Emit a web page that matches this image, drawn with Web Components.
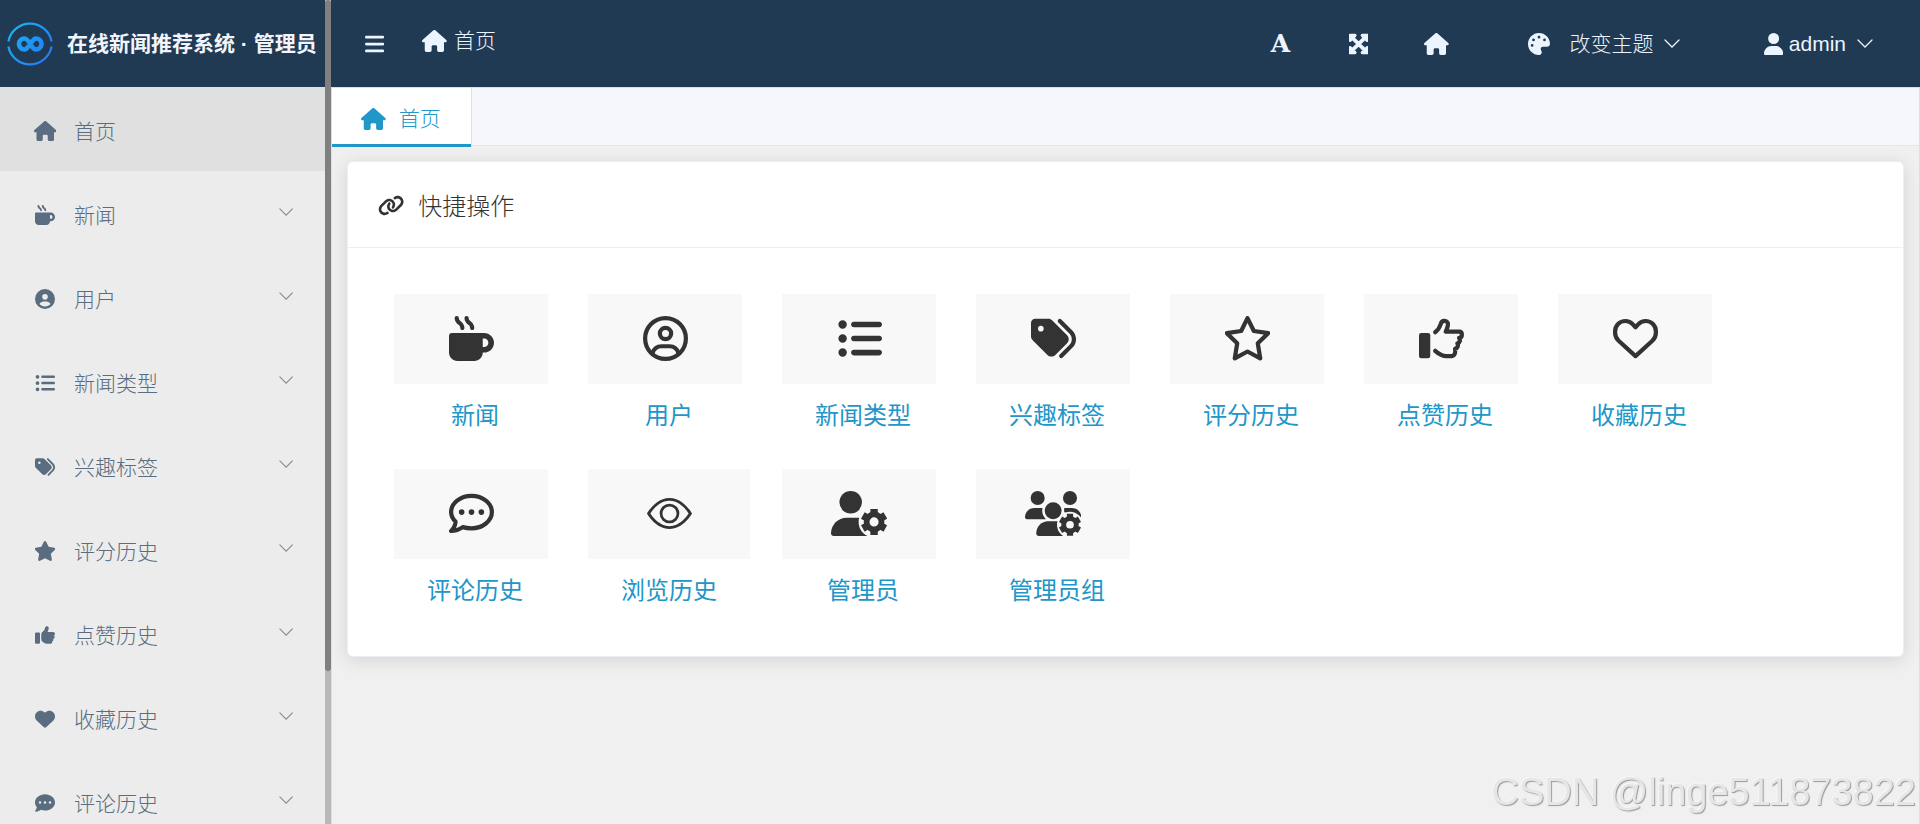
<!DOCTYPE html>
<html lang="zh-CN">
<head>
<meta charset="UTF-8">
<title>在线新闻推荐系统 · 管理员</title>
<style>
    :root {
        --header-bg: #203a53;
        --header-text: #ecf5ff;
        --menu-bg: #ececec;
        --menu-active: #e0e0e0;
        --menu-text: #596c80;
        --primary: #2196c9;
        --dark: #333333;
        --page-bg: #f0f0f0;
        --line: #ebeef5;
    }
    html, body { margin: 0; height: 100%; }
    body {
        font-family: "Liberation Sans", "Noto Sans CJK SC", sans-serif;
        font-size: 21px;
        font-weight: 300;
        overflow: hidden;
    }
</style>
</head>
<body>
<x-app>
    <x-sidebar slot="side">
        <x-brand slot="brand">在线新闻推荐系统 · 管理员</x-brand>
        <x-menu-item icon="home" active>首页</x-menu-item>
        <x-menu-item icon="mug">新闻</x-menu-item>
        <x-menu-item icon="user-circle">用户</x-menu-item>
        <x-menu-item icon="list">新闻类型</x-menu-item>
        <x-menu-item icon="tags">兴趣标签</x-menu-item>
        <x-menu-item icon="star">评分历史</x-menu-item>
        <x-menu-item icon="thumb">点赞历史</x-menu-item>
        <x-menu-item icon="heart">收藏历史</x-menu-item>
        <x-menu-item icon="comment">评论历史</x-menu-item>
    </x-sidebar>
    <x-topbar slot="top"></x-topbar>
    <x-tab slot="tabs" icon="home">首页</x-tab>
    <x-card icon="link" heading="快捷操作">
        <x-quick-link icon="mug">新闻</x-quick-link>
        <x-quick-link icon="user-circle-o">用户</x-quick-link>
        <x-quick-link icon="list">新闻类型</x-quick-link>
        <x-quick-link icon="tags">兴趣标签</x-quick-link>
        <x-quick-link icon="star-o">评分历史</x-quick-link>
        <x-quick-link icon="thumb-o">点赞历史</x-quick-link>
        <x-quick-link icon="heart-o">收藏历史</x-quick-link>
        <x-quick-link icon="comment-o">评论历史</x-quick-link>
        <x-quick-link icon="eye" wide>浏览历史</x-quick-link>
        <x-quick-link icon="user-gear">管理员</x-quick-link>
        <x-quick-link icon="users-gear">管理员组</x-quick-link>
    </x-card>
</x-app>
<x-watermark>CSDN @linge511873822</x-watermark>

<script>
// ═══════════════════════════════════════
// ICONS: [width, height, markup]
// ═══════════════════════════════════════
const line = 'fill="none" stroke="currentColor" stroke-width="48" stroke-linecap="round" stroke-linejoin="round"';

// Gear with six teeth around (0, 0), outer radius 148
const gear = `<circle r="85" fill="none" stroke="currentColor" stroke-width="66"/>
    <path fill="none" stroke="currentColor" stroke-width="84" stroke-linejoin="round"
        d="M0-96V-148M0 96V148M83-48L128-74M-83-48L-128-74M83 48L128 74M-83 48L-128 74"/>`;

const ICONS = {
    'home': [576, 512, '<path d="M575.8 255.5c0 18-15 32.1-32 32.1h-32l.7 160.2c0 2.7-.2 5.4-.5 8.1V472c0 22.1-17.9 40-40 40H456c-1.1 0-2.2 0-3.3-.1c-1.4 .1-2.8 .1-4.2 .1H392c-22.1 0-40-17.9-40-40V384c0-17.7-14.3-32-32-32H256c-17.7 0-32 14.3-32 32v88c0 22.1-17.9 40-40 40H128.1c-1.5 0-3-.1-4.5-.2c-1.2 .1-2.4 .2-3.6 .2H104c-22.1 0-40-17.9-40-40V360c0-.9 0-1.9 .1-2.8V287.6H32c-18 0-32-14-32-32.1c0-9 3-17 10-24L266.4 8c7-7 15-8 22-8s15 2 21 7L564.8 231.5c8 7 12 15 11 24z"/>'],
    'mug': [512, 512, '<path d="M88 0C74.7 0 64 10.7 64 24c0 38.9 23.4 59.4 39.1 73.1l1.1 1C120.5 112.3 128 119.9 128 136c0 13.3 10.7 24 24 24s24-10.7 24-24c0-38.9-23.4-59.4-39.1-73.1l-1.1-1C119.5 47.7 112 40.1 112 24c0-13.3-10.7-24-24-24zM32 192c-17.7 0-32 14.3-32 32V416c0 53 43 96 96 96H288c53 0 96-43 96-96h16c61.9 0 112-50.1 112-112s-50.1-112-112-112H32zm352 64h16c26.5 0 48 21.5 48 48s-21.5 48-48 48H384V256zM224 24c0-13.3-10.7-24-24-24s-24 10.7-24 24c0 38.9 23.4 59.4 39.1 73.1l1.1 1C232.5 112.3 240 119.9 240 136c0 13.3 10.7 24 24 24s24-10.7 24-24c0-38.9-23.4-59.4-39.1-73.1l-1.1-1C231.5 47.7 224 40.1 224 24z"/>'],
    'user-circle': [512, 512, '<path fill-rule="evenodd" d="M399 384.2C376.9 345.8 335.4 320 288 320H224c-47.4 0-88.9 25.8-111 64.2c35.2 39.2 86.2 63.8 143 63.8s107.8-24.7 143-63.8zM0 256a256 256 0 1 1 512 0A256 256 0 1 1 0 256zm256 16a72 72 0 1 0 0-144 72 72 0 1 0 0 144z"/>'],
    'user-circle-o': [512, 512, `<g ${line}><circle cx="256" cy="256" r="232"/><circle cx="256" cy="200" r="64"/><path d="M108 424C122 376 160 344 210 344H302C352 344 390 376 404 424"/></g>`],
    'list': [512, 512, '<path d="M64 144a48 48 0 1 0 0-96 48 48 0 1 0 0 96zM192 64c-17.7 0-32 14.3-32 32s14.3 32 32 32H480c17.7 0 32-14.3 32-32s-14.3-32-32-32H192zm0 160c-17.7 0-32 14.3-32 32s14.3 32 32 32H480c17.7 0 32-14.3 32-32s-14.3-32-32-32H192zm0 160c-17.7 0-32 14.3-32 32s14.3 32 32 32H480c17.7 0 32-14.3 32-32s-14.3-32-32-32H192zM64 464a48 48 0 1 0 0-96 48 48 0 1 0 0 96zm48-208a48 48 0 1 0 -96 0 48 48 0 1 0 96 0z"/>'],
    'tags': [512, 512, '<path d="M345 39.1L472.8 168.4c52.4 53 52.4 138.2 0 191.2L360.8 472.9c-9.3 9.4-24.5 9.5-33.9 .2s-9.5-24.5-.2-33.9L438.6 325.9c33.9-34.3 33.9-89.4 0-123.7L310.9 72.9c-9.3-9.4-9.2-24.6 .2-33.9s24.6-9.2 33.9 .2zM0 229.5V80C0 53.5 21.5 32 48 32H197.5c17 0 33.3 6.7 45.3 18.7l168 168c25 25 25 65.5 0 90.5L277.3 442.7c-25 25-65.5 25-90.5 0l-168-168C6.7 262.7 0 246.5 0 229.5zM144 144a32 32 0 1 0 -64 0 32 32 0 1 0 64 0z"/>'],
    'star': [512, 512, '<path transform="translate(-32 0)" d="M316.9 18C311.6 7 300.4 0 288.1 0s-23.4 7-28.8 18L195 150.3 51.4 171.5c-12 1.8-22 10.2-25.7 21.7s-.7 24.2 7.9 32.7L137.8 329 113.2 474.7c-2 12 3 24.2 12.9 31.3s23 8 33.8 2.3l128.3-68.5 128.3 68.5c10.8 5.7 23.9 4.9 33.8-2.3s14.9-19.3 12.9-31.3L438.5 329 542.7 225.9c8.6-8.5 11.7-21.2 7.9-32.7s-13.7-19.9-25.7-21.7L381.2 150.3 316.9 18z"/>'],
    'star-o': [512, 512, `<path ${line} d="M256 24L328 171 491 195 373 311 401 482 256 404 111 482 139 311 21 195 184 171Z"/>`],
    'thumb': [512, 512, '<path d="M313.4 32.9c26 5.2 42.9 30.5 37.7 56.5l-2.3 11.4c-5.3 26.7-15.1 52.1-28.8 75.2H464c26.5 0 48 21.5 48 48c0 18.5-10.5 34.6-25.9 42.6C497 275.4 504 288.9 504 304c0 23.4-16.8 42.9-38.9 47.1c4.4 7.3 6.9 15.8 6.9 24.9c0 21.3-13.9 39.4-33.1 45.6c.7 3.3 1.1 6.8 1.1 10.4c0 26.5-21.5 48-48 48H294.5c-19 0-37.5-5.6-53.3-16.1l-38.5-25.7C176 420.4 160 390.4 160 358.3V247.1c0-29.2 13.3-56.7 36-75l7.4-5.9c26.5-21.2 44.6-51 51.2-84.2l2.3-11.4c5.2-26 30.5-42.9 56.5-37.7zM32 192H96c17.7 0 32 14.3 32 32V448c0 17.7-14.3 32-32 32H32c-17.7 0-32-14.3-32-32V224c0-17.7 14.3-32 32-32z"/>'],
    'thumb-o': [512, 512, `<rect y="192" width="128" height="288" rx="26"/><path ${line} d="M184 185C220 158 236 128 246 94C253 66 268 54 292 56C320 59 335 80 329 105C324 131 316 154 304 178H456C478 178 488 194 488 212C488 232 476 246 456 249C475 268 470 300 436 312C452 336 440 366 410 374C418 404 410 456 374 456H312C262 456 222 430 184 396"/>`],
    'heart': [512, 512, '<path d="M47.6 300.4L228.3 469.1c7.5 7 17.4 10.9 27.7 10.9s20.2-3.9 27.7-10.9L464.4 300.4c30.4-28.3 47.6-68 47.6-109.5v-5.8c0-69.9-50.5-129.5-119.4-141C347 36.5 300.6 51.4 268 84L256 96 244 84c-32.6-32.6-79-47.5-124.6-39.9C50.5 55.6 0 115.2 0 185.1v5.8c0 41.5 17.2 81.2 47.6 109.5z"/>'],
    'heart-o': [512, 512, `<path ${line} d="M256 128L226 95C202 68 170 57 140 57C75 57 24 108 24 175v15c0 35 15 68 40 92L256 456 448 282c25-24 40-57 40-92v-15C488 108 437 57 372 57C342 57 310 68 286 95Z"/>`],
    'comment': [512, 512, '<path fill-rule="evenodd" d="M256 448c141.4 0 256-93.1 256-208S397.4 32 256 32S0 125.1 0 240c0 45.1 17.7 86.8 47.7 120.9c-1.9 24.5-11.4 46.3-21.4 62.9c-5.5 9.2-11.1 16.6-15.2 21.6c-2.1 2.5-3.7 4.4-6.5 7.4c-4.6 4.6-5.9 11.4-3.4 17.4c2.5 6 8.3 9.9 14.8 9.9c28.7 0 57.6-8.9 81.6-19.3c22.9-10 42.4-21.9 54.3-30.6c31.8 11.5 67 17.9 104.1 17.9zM128 208a32 32 0 1 1 0 64 32 32 0 1 1 0-64zm128 0a32 32 0 1 1 0 64 32 32 0 1 1 0-64zm96 32a32 32 0 1 1 64 0 32 32 0 1 1 -64 0z"/>'],
    'comment-o': [512, 512, `<path ${line} d="M256 424C384 424 488 341 488 240S384 56 256 56 24 139 24 240C24 282 42 318 74 348C72 390 56 424 24 455C72 455 116 440 156 411C188 420 220 424 256 424Z"/><circle cx="144" cy="240" r="32"/><circle cx="256" cy="240" r="32"/><circle cx="368" cy="240" r="32"/>`],
    'eye': [1024, 1024, '<path d="M512 160c320 0 512 352 512 352S832 864 512 864 0 512 0 512s192-352 512-352zm0 64c-225.28 0-384.128 208.064-436.8 288 52.608 79.872 211.456 288 436.8 288 225.28 0 384.128-208.064 436.8-288-52.608-79.872-211.456-288-436.8-288zm0 64a224 224 0 1 1 0 448 224 224 0 0 1 0-448zm0 64a160.192 160.192 0 0 0-160 160c0 88.192 71.744 160 160 160s160-71.808 160-160-71.744-160-160-160z"/>'],
    'user-gear': [640, 512, `<mask id="m"><rect width="640" height="512" fill="#fff"/><circle cx="490" cy="352" r="176" fill="#000"/></mask>
        <circle cx="224" cy="128" r="128"/>
        <path mask="url(#m)" d="M178 304C80 304 0 384 0 482C0 499 13 512 30 512H418C440 512 448 499 448 482V304Z"/>
        <g transform="translate(490 352)">${gear}</g>`],
    'users-gear': [640, 512, `<mask id="m"><rect width="640" height="512" fill="#fff"/><circle cx="320" cy="224" r="124" fill="#000"/></mask>
        <mask id="n"><rect width="640" height="512" fill="#fff"/><circle cx="512" cy="384" r="148" fill="#000"/></mask>
        <circle cx="144" cy="80" r="80"/><circle cx="512" cy="80" r="80"/><circle cx="320" cy="224" r="96"/>
        <path mask="url(#m)" d="M106 192C48 192 0 240 0 299C0 311 10 320 21 320H236V192Z"/>
        <g mask="url(#n)"><path d="M446 192H534C592 192 640 240 640 299H600L512 270 446 240Z"/>
        <path d="M262 344C190 344 128 404 128 480C128 500 142 512 156 512H460V344Z"/></g>
        <g transform="translate(512 384) scale(.84)">${gear}</g>`],
    'link': [640, 512, '<path d="M579.8 267.7c56.5-56.5 56.5-148 0-204.5c-50-50-128.8-56.5-186.3-15.4l-1.6 1.1c-14.4 10.3-17.7 30.3-7.4 44.6s30.3 17.7 44.6 7.4l1.6-1.1c32.1-22.9 76-19.3 103.8 8.6c31.5 31.5 31.5 82.5 0 114L422.3 334.8c-31.5 31.5-82.5 31.5-114 0c-27.9-27.9-31.5-71.8-8.6-103.8l1.1-1.6c10.3-14.4 6.9-34.4-7.4-44.6s-34.4-6.9-44.6 7.4l-1.1 1.6C206.5 251.2 213 330 263 380c56.5 56.5 148 56.5 204.5 0L579.8 267.7zM60.2 244.3c-56.5 56.5-56.5 148 0 204.5c50 50 128.8 56.5 186.3 15.4l1.6-1.1c14.4-10.3 17.7-30.3 7.4-44.6s-30.3-17.7-44.6-7.4l-1.6 1.1c-32.1 22.9-76 19.3-103.8-8.6C74 372 74 321 105.5 289.5L217.7 177.2c31.5-31.5 82.5-31.5 114 0c27.9 27.9 31.5 71.8 8.6 103.9l-1.1 1.6c-10.3 14.4-6.9 34.4 7.4 44.6s34.4 6.9 44.6-7.4l1.1-1.6C433.5 260.8 427 182 377 132c-56.5-56.5-148-56.5-204.5 0L60.2 244.3z"/>'],
    'bars': [448, 512, '<path d="M0 96C0 78 14 64 32 64H416a32 32 0 0 1 0 64H32C14 128 0 114 0 96zM0 256c0-18 14-32 32-32H416a32 32 0 0 1 0 64H32c-18 0-32-14-32-32zM0 416c0-18 14-32 32-32H416a32 32 0 0 1 0 64H32c-18 0-32-14-32-32z"/>'],
    'expand': [448, 512, '<path stroke="currentColor" stroke-width="32" d="M448 344v112a23.94 23.94 0 0 1-24 24H312c-21.39 0-32.09-25.9-17-41l36.2-36.2L224 295.6 116.77 402.9 153 439c15.09 15.1 4.39 41-17 41H24a23.94 23.94 0 0 1-24-24V344c0-21.4 25.89-32.1 41-17l36.19 36.2L184.46 256 77.18 148.7 41 185c-15.1 15.1-41 4.4-41-17V56a23.94 23.94 0 0 1 24-24h112c21.39 0 32.09 25.9 17 41l-36.2 36.2L224 216.4l107.23-107.3L295 73c-15.09-15.1-4.39-41 17-41h112a23.94 23.94 0 0 1 24 24v112c0 21.4-25.89 32.1-41 17l-36.19-36.2L263.54 256l107.28 107.3L407 327c15.1-15.2 41-4.5 41 17z"/>'],
    'palette': [512, 512, '<path d="M512 256c0 .9 0 1.8 0 2.7c-.4 36.5-33.6 61.3-70.1 61.3H344c-26.5 0-48 21.5-48 48c0 3.4 .4 6.7 1 9.9c2.1 10.2 6.5 20 10.8 29.9c6.1 13.8 12.1 27.5 12.1 42c0 31.8-21.6 60.7-53.4 62c-3.5 .1-7 .2-10.6 .2C114.6 512 0 397.4 0 256S114.6 0 256 0S512 114.6 512 256zM128 288a32 32 0 1 0 -64 0 32 32 0 1 0 64 0zm0-96a32 32 0 1 0 0-64 32 32 0 1 0 0 64zM288 96a32 32 0 1 0 -64 0 32 32 0 1 0 64 0zm96 96a32 32 0 1 0 0-64 32 32 0 1 0 0 64z"/>'],
    'user': [448, 512, '<path d="M224 256A128 128 0 1 0 224 0a128 128 0 1 0 0 256zm-45.7 48C79.8 304 0 383.8 0 482.3C0 498.7 13.3 512 29.7 512H418.3c16.4 0 29.7-13.3 29.7-29.7C448 383.8 368.2 304 269.7 304H178.3z"/>'],
    'chevron': [16, 9, '<path fill="none" stroke="currentColor" stroke-width="1.3" stroke-linecap="round" d="M1 1L8 8 15 1"/>'],
    'logo': [46, 46, `<defs><linearGradient id="g" gradientUnits="userSpaceOnUse" x1="4" y1="8" x2="42" y2="38"><stop stop-color="#1ab2f3"/><stop offset="1" stop-color="#2478f5"/></linearGradient></defs>
        <g fill="none" stroke="url(#g)"><path stroke-width="2.2" d="M1.4 20.5A22 22 0 0 1 44.6 20.5M1.4 25.5A22 22 0 0 0 44.6 25.5"/>
        <path stroke-width="4.6" stroke-linecap="round" d="M21 25.8C20 27.4 19 28.5 17.5 28.5A5.5 5.5 0 0 1 17.5 17.5C22.5 17.5 24 28.5 29 28.5A5.5 5.5 0 0 0 29 17.5C27.4 17.5 26.4 18.6 25.4 20.2"/></g>`]
};

class AppIcon extends HTMLElement {
    connectedCallback() {
        const [w, h, body] = ICONS[this.getAttribute('name')];
        const root = this.shadowRoot || this.attachShadow({ mode: 'open' });
        root.innerHTML = `
            <style>
                :host { display: inline-flex; flex: none; height: 22px; }
                svg { display: block; height: 100%; width: auto; aspect-ratio: ${w} / ${h}; }
            </style>
            <svg viewBox="0 0 ${w} ${h}" fill="currentColor" aria-hidden="true">${body}</svg>
        `;
    }
}

// ═══════════════════════════════════════
// BASE: renders view() into the shadow root
// ═══════════════════════════════════════
class BaseElement extends HTMLElement {
    constructor() {
        super();
        this.attachShadow({ mode: 'open' });
    }

    connectedCallback() {
        this.shadowRoot.innerHTML = `
            <style>
                * { box-sizing: border-box; }
                a { color: inherit; text-decoration: none; }
                button { font: inherit; color: inherit; background: none; border: 0; padding: 0; margin: 0; cursor: pointer; }
                .text { padding-bottom: 3px; }
            </style>
            ${this.view()}
        `;
    }
}

class AppShell extends BaseElement {
    view() {
        return `
            <style>
                :host { display: flex; height: 100vh; background: var(--page-bg); }
                .main { flex: 1; min-width: 0; display: flex; flex-direction: column; }
                .page { flex: 1; display: flex; flex-direction: column; border: 1px solid #dcdfe6; border-bottom: 0; }
                .tabs { display: flex; height: 58px; background: #f5f7fc; border-bottom: 1px solid #e4e7ed; }
                main { padding: 15px; }
            </style>
            <slot name="side"></slot>
            <div class="main">
                <slot name="top"></slot>
                <div class="page">
                    <nav class="tabs"><slot name="tabs"></slot></nav>
                    <main><slot></slot></main>
                </div>
            </div>
        `;
    }
}

class AppSidebar extends BaseElement {
    view() {
        return `
            <style>
                :host { display: flex; flex: none; width: 331px; overflow: hidden; background: var(--menu-bg); }
                .content { flex: 1; min-width: 0; overflow: hidden; }
                .track { flex: none; width: 6px; background: #b8b8b8; }
                .thumb { height: 81.4%; border-radius: 3px; background: #808080; }
            </style>
            <div class="content">
                <slot name="brand"></slot>
                <nav><slot></slot></nav>
            </div>
            <div class="track"><div class="thumb"></div></div>
        `;
    }
}

class AppBrand extends BaseElement {
    view() {
        return `
            <style>
                :host {
                    display: flex; align-items: center; gap: 14px;
                    height: 87px; padding-left: 7px; box-sizing: border-box;
                    background: var(--header-bg); color: #f2f6fc;
                    font-weight: 700; white-space: nowrap;
                }
                x-icon { height: 46px; }
            </style>
            <x-icon name="logo"></x-icon><span class="text"><slot></slot></span>
        `;
    }
}

class MenuItem extends BaseElement {
    view() {
        const active = this.hasAttribute('active');
        return `
            <style>
                :host { display: block; color: var(--menu-text); }
                a { display: flex; align-items: center; height: 84px; padding: 4px 32px 0 33px; background: ${active ? 'var(--menu-active)' : 'none'}; }
                .icon { display: flex; justify-content: center; width: 24px; margin-right: 17px; }
                .icon x-icon { height: 20px; }
                .arrow { height: 8px; margin: 0 0 7px auto; color: #868c96; }
            </style>
            <a href="#"><span class="icon"><x-icon name="${this.getAttribute('icon')}"></x-icon></span>
            <span class="text"><slot></slot></span>
            ${active ? '' : '<x-icon class="arrow" name="chevron"></x-icon>'}</a>
        `;
    }
}

class AppTopbar extends BaseElement {
    view() {
        return `
            <style>
                :host {
                    display: flex; align-items: center; flex: none;
                    height: 87px; padding: 0 47px 0 34px; box-sizing: border-box;
                    background: var(--header-bg); color: var(--header-text); white-space: nowrap;
                }
                button, a { display: flex; align-items: center; }
                .crumb { gap: 7px; margin-left: 38px; padding-bottom: 6px; }
                .tools { display: flex; margin-left: auto; }
                .tools > * { width: 78px; justify-content: center; }
                .letter { font: 700 25px/28px "DejaVu Serif", serif; }
                .theme { gap: 10px; margin-left: 52px; }
                .theme .text { margin-left: 10px; }
                .account { gap: 11px; margin-left: 84px; }
                .account .name { display: flex; align-items: center; gap: 6px; }
                .arrow { height: 9px; }
            </style>
            <button aria-label="菜单"><x-icon name="bars"></x-icon></button>
            <a class="crumb" href="#"><x-icon name="home"></x-icon><span class="text">首页</span></a>
            <div class="tools">
                <button class="letter">A</button>
                <button aria-label="全屏"><x-icon name="expand"></x-icon></button>
                <a href="#" aria-label="首页"><x-icon name="home"></x-icon></a>
            </div>
            <button class="theme"><x-icon name="palette"></x-icon><span class="text">改变主题</span><x-icon class="arrow" name="chevron"></x-icon></button>
            <button class="account"><span class="name"><x-icon name="user"></x-icon>admin</span><x-icon class="arrow" name="chevron"></x-icon></button>
        `;
    }
}

class AppTab extends BaseElement {
    view() {
        return `
            <style>
                :host { display: block; color: var(--primary); }
                a {
                    display: flex; align-items: center; gap: 13px;
                    height: 59px; padding: 2px 30px 0 29px;
                    background: #ffffff; border-right: 1px solid #dcdfe6;
                    box-shadow: inset 0 -3px var(--primary);
                }
            </style>
            <a href="#"><x-icon name="${this.getAttribute('icon')}"></x-icon><span class="text"><slot></slot></span></a>
        `;
    }
}

class AppCard extends BaseElement {
    view() {
        return `
            <style>
                :host {
                    display: block; color: var(--dark); background: #ffffff;
                    border: 1px solid var(--line); border-radius: 6px;
                    box-shadow: 0 3px 18px rgba(0, 0, 0, 0.12);
                }
                h2 {
                    display: flex; align-items: center; gap: 14px;
                    height: 86px; margin: 0; padding: 2px 30px 0;
                    border-bottom: 1px solid var(--line);
                    font-size: 24px; font-weight: inherit;
                }
                x-icon { height: 21px; }
                .grid { display: grid; grid-template-columns: repeat(auto-fill, 194px); padding: 30px 30px 28px; }
            </style>
            <h2><x-icon name="${this.getAttribute('icon')}"></x-icon><span class="text">${this.getAttribute('heading')}</span></h2>
            <div class="grid"><slot></slot></div>
        `;
    }
}

class QuickLink extends BaseElement {
    view() {
        const wide = this.hasAttribute('wide');
        return `
            <style>
                :host { display: block; padding: 16px 0; font-size: 24px; font-weight: 400; }
                .tile { display: flex; align-items: center; justify-content: center; width: ${wide ? 162 : 154}px; height: 90px; margin-left: 16px; padding-bottom: 2px; background: #f8f8f8; color: var(--dark); }
                .tile x-icon { height: 45px; }
                .label { display: block; padding-top: 11px; line-height: 42px; text-align: center; color: var(--primary); }
            </style>
            <a href="#">
                <span class="tile"><x-icon name="${this.getAttribute('icon')}"></x-icon></span>
                <span class="label"><slot></slot></span>
            </a>
        `;
    }
}

class AppWatermark extends BaseElement {
    view() {
        return `
            <style>
                :host {
                    position: fixed; right: 4px; bottom: 11px;
                    font-size: 38px; line-height: 42px; font-weight: 400; color: #e6e6e6;
                    text-shadow: 1px 1px 1px #999999, -1px -1px 0 #f6f6f6;
                    pointer-events: none;
                }
            </style>
            <slot></slot>
        `;
    }
}

customElements.define('x-icon', AppIcon);
customElements.define('x-app', AppShell);
customElements.define('x-sidebar', AppSidebar);
customElements.define('x-brand', AppBrand);
customElements.define('x-menu-item', MenuItem);
customElements.define('x-topbar', AppTopbar);
customElements.define('x-tab', AppTab);
customElements.define('x-card', AppCard);
customElements.define('x-quick-link', QuickLink);
customElements.define('x-watermark', AppWatermark);
</script>
</body>
</html>
